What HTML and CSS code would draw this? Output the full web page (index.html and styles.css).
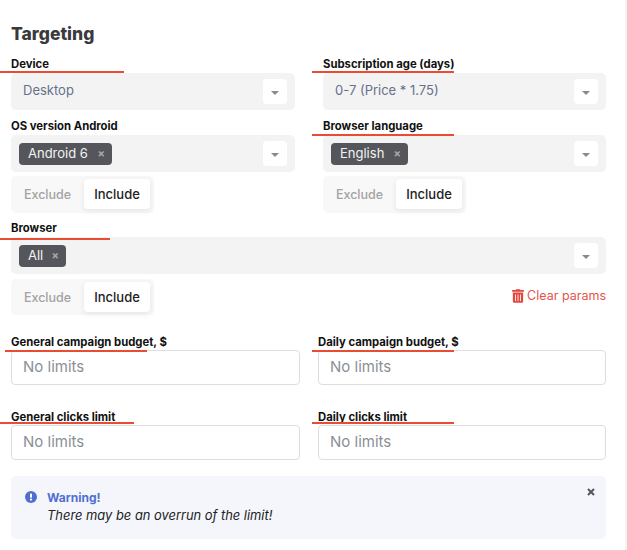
FILE: index.html
```html
<!DOCTYPE html>
<html lang="en">

<head>
    <meta charset="UTF-8">
    <title>Targeting</title>
    <link rel="stylesheet" href="styles.css">
</head>

<body>
    <div class="page">
        <h2 class="title">Targeting</h2>

        <div class="cols">
            <div class="form-group">
                <label class="label">Device</label>
                <div class="select">
                    <span class="value">Desktop</span>
                    <span class="arrow"></span>
                </div>
            </div>
            <div class="form-group">
                <label class="label">Subscription age (days)</label>
                <div class="select">
                    <span class="value">0-7 (Price * 1.75)</span>
                    <span class="arrow"></span>
                </div>
            </div>
            <div class="form-group">
                <label class="label">OS version Android</label>
                <div class="select">
                    <span class="chip chip-android">Android 6 <i class="chip-x">&times;</i></span>
                    <span class="arrow"></span>
                </div>
                <div class="toggle">
                    <span class="toggle-off">Exclude</span>
                    <span class="toggle-on">Include</span>
                </div>
            </div>
            <div class="form-group">
                <label class="label">Browser language</label>
                <div class="select">
                    <span class="chip chip-english">English <i class="chip-x">&times;</i></span>
                    <span class="arrow"></span>
                </div>
                <div class="toggle">
                    <span class="toggle-off">Exclude</span>
                    <span class="toggle-on">Include</span>
                </div>
            </div>
        </div>

        <div class="form-group browser">
            <label class="label">Browser</label>
            <div class="select">
                <span class="chip chip-all">All <i class="chip-x">&times;</i></span>
                <span class="arrow"></span>
            </div>
            <div class="browser-foot">
                <div class="toggle">
                    <span class="toggle-off">Exclude</span>
                    <span class="toggle-on">Include</span>
                </div>
                <a class="clear" href="#">
                    <svg class="clear-icon" viewBox="0 0 448 512" width="12" height="14">
                        <path fill="#e2463c" d="M32 464a48 48 0 0 0 48 48h288a48 48 0 0 0 48-48V128H32zm272-256a16 16 0 0 1 32 0v224a16 16 0 0 1-32 0zm-96 0a16 16 0 0 1 32 0v224a16 16 0 0 1-32 0zm-96 0a16 16 0 0 1 32 0v224a16 16 0 0 1-32 0zM432 32H312l-9-19a24 24 0 0 0-22-13H167a24 24 0 0 0-22 13l-9 19H16A16 16 0 0 0 0 48v32a16 16 0 0 0 16 16h416a16 16 0 0 0 16-16V48a16 16 0 0 0-16-16z"/>
                    </svg>
                    Clear params
                </a>
            </div>
        </div>

        <div class="limits">
            <div>
                <label class="label">General campaign budget, $</label>
                <input class="input" type="text" placeholder="No limits">
            </div>
            <div>
                <label class="label">Daily campaign budget, $</label>
                <input class="input" type="text" placeholder="No limits">
            </div>
            <div>
                <label class="label">General clicks limit</label>
                <input class="input" type="text" placeholder="No limits">
            </div>
            <div>
                <label class="label">Daily clicks limit</label>
                <input class="input" type="text" placeholder="No limits">
            </div>
        </div>

        <div class="alert">
            <svg class="alert-icon" viewBox="0 0 12 12" width="12" height="12">
                <circle cx="6" cy="6" r="6" fill="#4f6fd0"/>
                <rect x="5" y="2.5" width="2" height="4.2" rx="0.6" fill="#fff"/>
                <circle cx="6" cy="8.6" r="1.1" fill="#fff"/>
            </svg>
            <div>
                <div class="alert-title">Warning!</div>
                <div class="alert-text">There may be an overrun of the limit!</div>
            </div>
            <svg class="alert-close" viewBox="0 0 8 8" width="8" height="8">
                <path d="M1 1l6 6M7 1L1 7" stroke="#55565b" stroke-width="2"/>
            </svg>
        </div>

        <!-- red underlines drawn over the form -->
        <span class="mark mark-device"></span>
        <span class="mark mark-age"></span>
        <span class="mark mark-lang"></span>
        <span class="mark mark-browser"></span>
        <span class="mark mark-gen-budget"></span>
        <span class="mark mark-day-budget"></span>
        <span class="mark mark-gen-clicks"></span>
        <span class="mark mark-day-clicks"></span>
    </div>
</body>

</html>
```

FILE: styles.css
```css
body {
    margin: 0;
    background-color: #fff;
    font-family: Inter, "Open Sans", sans-serif;
}

.page {
    position: relative;
    box-sizing: border-box;
    width: 627px;
    height: 550px;
    overflow: hidden;
    padding: 24px 19px 0 11px;
    border-right: 2px solid #f4f4f4;
}

.title {
    margin: 0 0 12px;
    font-size: 17.5px;
    line-height: 20px;
    font-weight: 800;
    color: #3a3a3c;
}

.label {
    display: block;
    margin-bottom: 3px;
    font-size: 11.3px;
    line-height: 15px;
    font-weight: 700;
    color: #111;
    padding-top: 1px;
    height: 13px;
}

.cols {
    display: grid;
    grid-template-columns: 284px 283px;
    column-gap: 28px;
    row-gap: 8px;
}

.select {
    display: flex;
    align-items: center;
    justify-content: space-between;
    box-sizing: border-box;
    height: 37px;
    padding: 0 8px;
    background-color: #f3f3f3;
    border-radius: 5px;
}

.value {
    padding-left: 4px;
    padding-bottom: 3px;
    font-size: 13px;
    color: #66708a;
}

.arrow {
    display: flex;
    align-items: center;
    justify-content: center;
    width: 24px;
    height: 25px;
    background-color: #fff;
    border-radius: 4px;
}

.arrow::after {
    content: "";
    margin-top: 3px;
    border-left: 4px solid transparent;
    border-right: 4px solid transparent;
    border-top: 4px solid #8a8a8a;
}

.chip {
    display: flex;
    align-items: center;
    justify-content: space-between;
    box-sizing: border-box;
    height: 22px;
    padding: 0 7px 1px 9px;
    background-color: #55565b;
    border-radius: 4px;
    font-size: 13px;
    color: #f2f2f2;
}

.chip-android {
    width: 93px;
}

.chip-english {
    width: 77px;
}

.chip-all {
    width: 47px;
}

.chip-x {
    font-style: normal;
    font-weight: 700;
    font-size: 11px;
    color: #a8a8aa;
}

.toggle {
    display: flex;
    box-sizing: border-box;
    width: 143px;
    height: 37px;
    margin-top: 4px;
    padding: 3px 4px 4px 0;
    background-color: #f8f8f8;
    border-radius: 5px;
    font-size: 12.5px;
    font-weight: 500;
}

.toggle-off {
    display: flex;
    align-items: center;
    justify-content: center;
    width: 73px;
    color: #a3a3a3;
}

.toggle-on {
    display: flex;
    align-items: center;
    justify-content: center;
    width: 66px;
    background-color: #fff;
    border-radius: 4px;
    box-shadow: 0 2px 6px rgba(0, 0, 0, 0.08);
    font-size: 13px;
    color: #222;
}

.browser {
    margin-top: 7px;
}

.browser .toggle {
    height: 36px;
    margin-top: 5px;
    padding-bottom: 3px;
}

.browser-foot {
    display: flex;
    align-items: center;
    justify-content: space-between;
}

.clear {
    display: flex;
    align-items: center;
    gap: 3px;
    margin-top: 2px;
    font-size: 12.5px;
    color: #e5534b;
    text-decoration: none;
}

.limits {
    display: grid;
    grid-template-columns: 289px 288px;
    column-gap: 18px;
    row-gap: 24px;
    margin-top: 19px;
}

.limits .label {
    margin-bottom: 2px;
}

.input {
    display: block;
    box-sizing: border-box;
    width: 100%;
    height: 35px;
    padding: 0 11px 2px;
    background-color: #fff;
    border: 1px solid #dedede;
    border-radius: 4px;
    font-family: inherit;
    font-size: 15px;
}

.input::placeholder {
    color: #8b8f96;
}

.alert {
    position: relative;
    display: flex;
    gap: 10px;
    box-sizing: border-box;
    height: 63px;
    margin-top: 16px;
    padding: 14px 14px;
    background-color: #f4f6fc;
    border-radius: 5px;
}

.alert-icon {
    margin-top: 1px;
    flex-shrink: 0;
}

.alert-title {
    font-size: 12px;
    line-height: 16px;
    font-weight: 700;
    color: #4f6fd0;
}

.alert-text {
    margin-top: 2px;
    font-size: 12.9px;
    line-height: 16px;
    font-style: italic;
    color: #222;
}

.alert-close {
    position: absolute;
    top: 12px;
    right: 11px;
}

.mark {
    position: absolute;
    height: 2px;
    background-color: #ea4b33;
}

.mark-device {
    left: 0;
    top: 71px;
    width: 124px;
}

.mark-age {
    left: 312px;
    top: 71px;
    width: 142px;
}

.mark-lang {
    left: 312px;
    top: 134px;
    width: 142px;
}

.mark-browser {
    left: 0;
    top: 238px;
    width: 110px;
}

.mark-gen-budget {
    left: 5px;
    top: 350px;
    width: 142px;
}

.mark-day-budget {
    left: 312px;
    top: 350px;
    width: 142px;
}

.mark-gen-clicks {
    left: 0;
    top: 422px;
    width: 134px;
}

.mark-day-clicks {
    left: 312px;
    top: 422px;
    width: 142px;
}
```
